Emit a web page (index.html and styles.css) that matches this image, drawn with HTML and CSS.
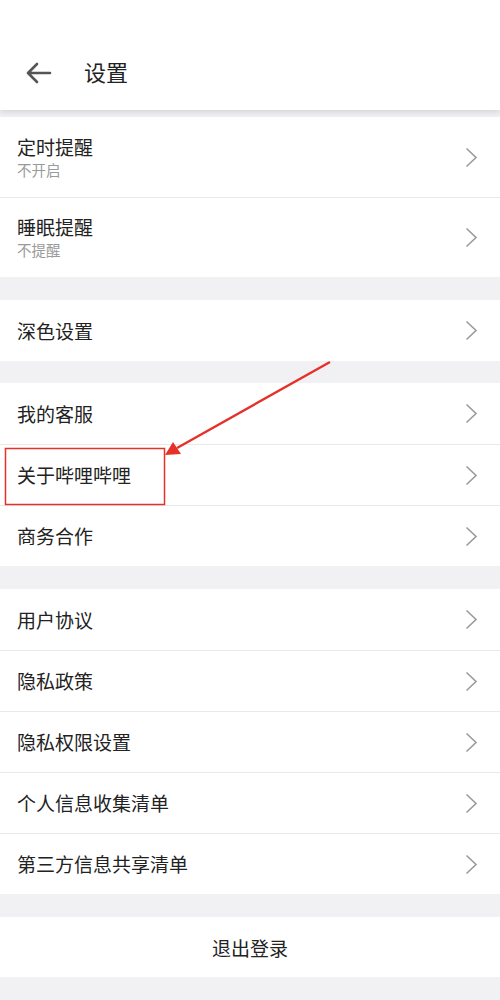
FILE: index.html
```html
<!DOCTYPE html>
<html lang="zh">
<head>
<meta charset="utf-8">
<link rel="stylesheet" href="styles.css">
</head>
<body>
<div class="page">
  <header class="header">
    <svg class="back" width="26" height="22" viewBox="0 0 26 22"><path d="M24 11H3M11 2L2 11l9 9" fill="none" stroke="#555" stroke-width="2.6" stroke-linecap="round" stroke-linejoin="round"/></svg>
    <span class="title">设置</span>
  </header>

  <section class="group first">
    <div class="row tall"><div class="text"><div class="label">定时提醒</div><div class="sub">不开启</div></div><svg class="chev" width="13" height="21" viewBox="0 0 13 21"><polyline points="1.5,1.5 11,10.5 1.5,19.5" fill="none" stroke="#9a9a9a" stroke-width="1.6"/></svg></div>
    <div class="row tall"><div class="text"><div class="label">睡眠提醒</div><div class="sub">不提醒</div></div><svg class="chev" width="13" height="21" viewBox="0 0 13 21"><polyline points="1.5,1.5 11,10.5 1.5,19.5" fill="none" stroke="#9a9a9a" stroke-width="1.6"/></svg></div>
  </section>

  <section class="group">
    <div class="row"><div class="label">深色设置</div><svg class="chev" width="13" height="21" viewBox="0 0 13 21"><polyline points="1.5,1.5 11,10.5 1.5,19.5" fill="none" stroke="#9a9a9a" stroke-width="1.6"/></svg></div>
  </section>

  <section class="group narrow-gap">
    <div class="row"><div class="label">我的客服</div><svg class="chev" width="13" height="21" viewBox="0 0 13 21"><polyline points="1.5,1.5 11,10.5 1.5,19.5" fill="none" stroke="#9a9a9a" stroke-width="1.6"/></svg></div>
    <div class="row"><div class="label">关于哔哩哔哩</div><svg class="chev" width="13" height="21" viewBox="0 0 13 21"><polyline points="1.5,1.5 11,10.5 1.5,19.5" fill="none" stroke="#9a9a9a" stroke-width="1.6"/></svg></div>
    <div class="row"><div class="label">商务合作</div><svg class="chev" width="13" height="21" viewBox="0 0 13 21"><polyline points="1.5,1.5 11,10.5 1.5,19.5" fill="none" stroke="#9a9a9a" stroke-width="1.6"/></svg></div>
  </section>

  <section class="group">
    <div class="row"><div class="label">用户协议</div><svg class="chev" width="13" height="21" viewBox="0 0 13 21"><polyline points="1.5,1.5 11,10.5 1.5,19.5" fill="none" stroke="#9a9a9a" stroke-width="1.6"/></svg></div>
    <div class="row"><div class="label">隐私政策</div><svg class="chev" width="13" height="21" viewBox="0 0 13 21"><polyline points="1.5,1.5 11,10.5 1.5,19.5" fill="none" stroke="#9a9a9a" stroke-width="1.6"/></svg></div>
    <div class="row"><div class="label">隐私权限设置</div><svg class="chev" width="13" height="21" viewBox="0 0 13 21"><polyline points="1.5,1.5 11,10.5 1.5,19.5" fill="none" stroke="#9a9a9a" stroke-width="1.6"/></svg></div>
    <div class="row"><div class="label">个人信息收集清单</div><svg class="chev" width="13" height="21" viewBox="0 0 13 21"><polyline points="1.5,1.5 11,10.5 1.5,19.5" fill="none" stroke="#9a9a9a" stroke-width="1.6"/></svg></div>
    <div class="row"><div class="label">第三方信息共享清单</div><svg class="chev" width="13" height="21" viewBox="0 0 13 21"><polyline points="1.5,1.5 11,10.5 1.5,19.5" fill="none" stroke="#9a9a9a" stroke-width="1.6"/></svg></div>
  </section>

  <section class="group">
    <div class="logout">退出登录</div>
  </section>

  <svg class="annotation" width="500" height="1000" viewBox="0 0 500 1000">
    <rect x="5.5" y="448.5" width="159" height="56" fill="none" stroke="#e5312a" stroke-width="1.5"/>
    <line x1="330" y1="362" x2="177" y2="448" stroke="#e5312a" stroke-width="2.4"/>
    <polygon points="165,455 173,442 181,454" fill="#e5312a"/>
  </svg>
</div>
</body>
</html>
```

FILE: styles.css
```css
html, body {
  margin: 0;
  padding: 0;
}
body {
  background: #f1f1f3;
  font-family: "Noto Sans CJK SC", "Noto Sans", sans-serif;
  color: #222;
}
.page {
  position: relative;
  width: 500px;
  height: 1000px;
  overflow: hidden;
}
.header {
  height: 110px;
  background: #fff;
  display: flex;
  align-items: center;
  padding: 36px 0 0 26px;
  box-sizing: border-box;
  box-shadow: 0 2px 6px rgba(0, 0, 0, 0.12);
  position: relative;
  z-index: 1;
}
.back {
  display: block;
}
.title {
  margin-left: 32px;
  margin-bottom: 4px;
  font-size: 22px;
  line-height: 30px;
  color: #222;
}
.group {
  background: #fff;
  margin-top: 23px;
}
.group.first {
  margin-top: 7px;
}
.group.narrow-gap {
  margin-top: 22px;
}
.row {
  height: 61px;
  box-sizing: border-box;
  display: flex;
  align-items: center;
  justify-content: space-between;
  padding: 0 22px 0 17px;
}
.row + .row {
  border-top: 1px solid #e9e9e9;
}
.row.tall {
  height: 80px;
}
.label {
  font-size: 19px;
  line-height: 24px;
  color: #222;
}
.sub {
  font-size: 14.5px;
  line-height: 20px;
  color: #9a9a9a;
  margin-top: 1px;
}
.chev {
  display: block;
  flex: none;
}
.logout {
  height: 60px;
  display: flex;
  align-items: center;
  justify-content: center;
  font-size: 19px;
  color: #222;
}
.annotation {
  position: absolute;
  left: 0;
  top: 0;
  pointer-events: none;
  z-index: 2;
}
```
